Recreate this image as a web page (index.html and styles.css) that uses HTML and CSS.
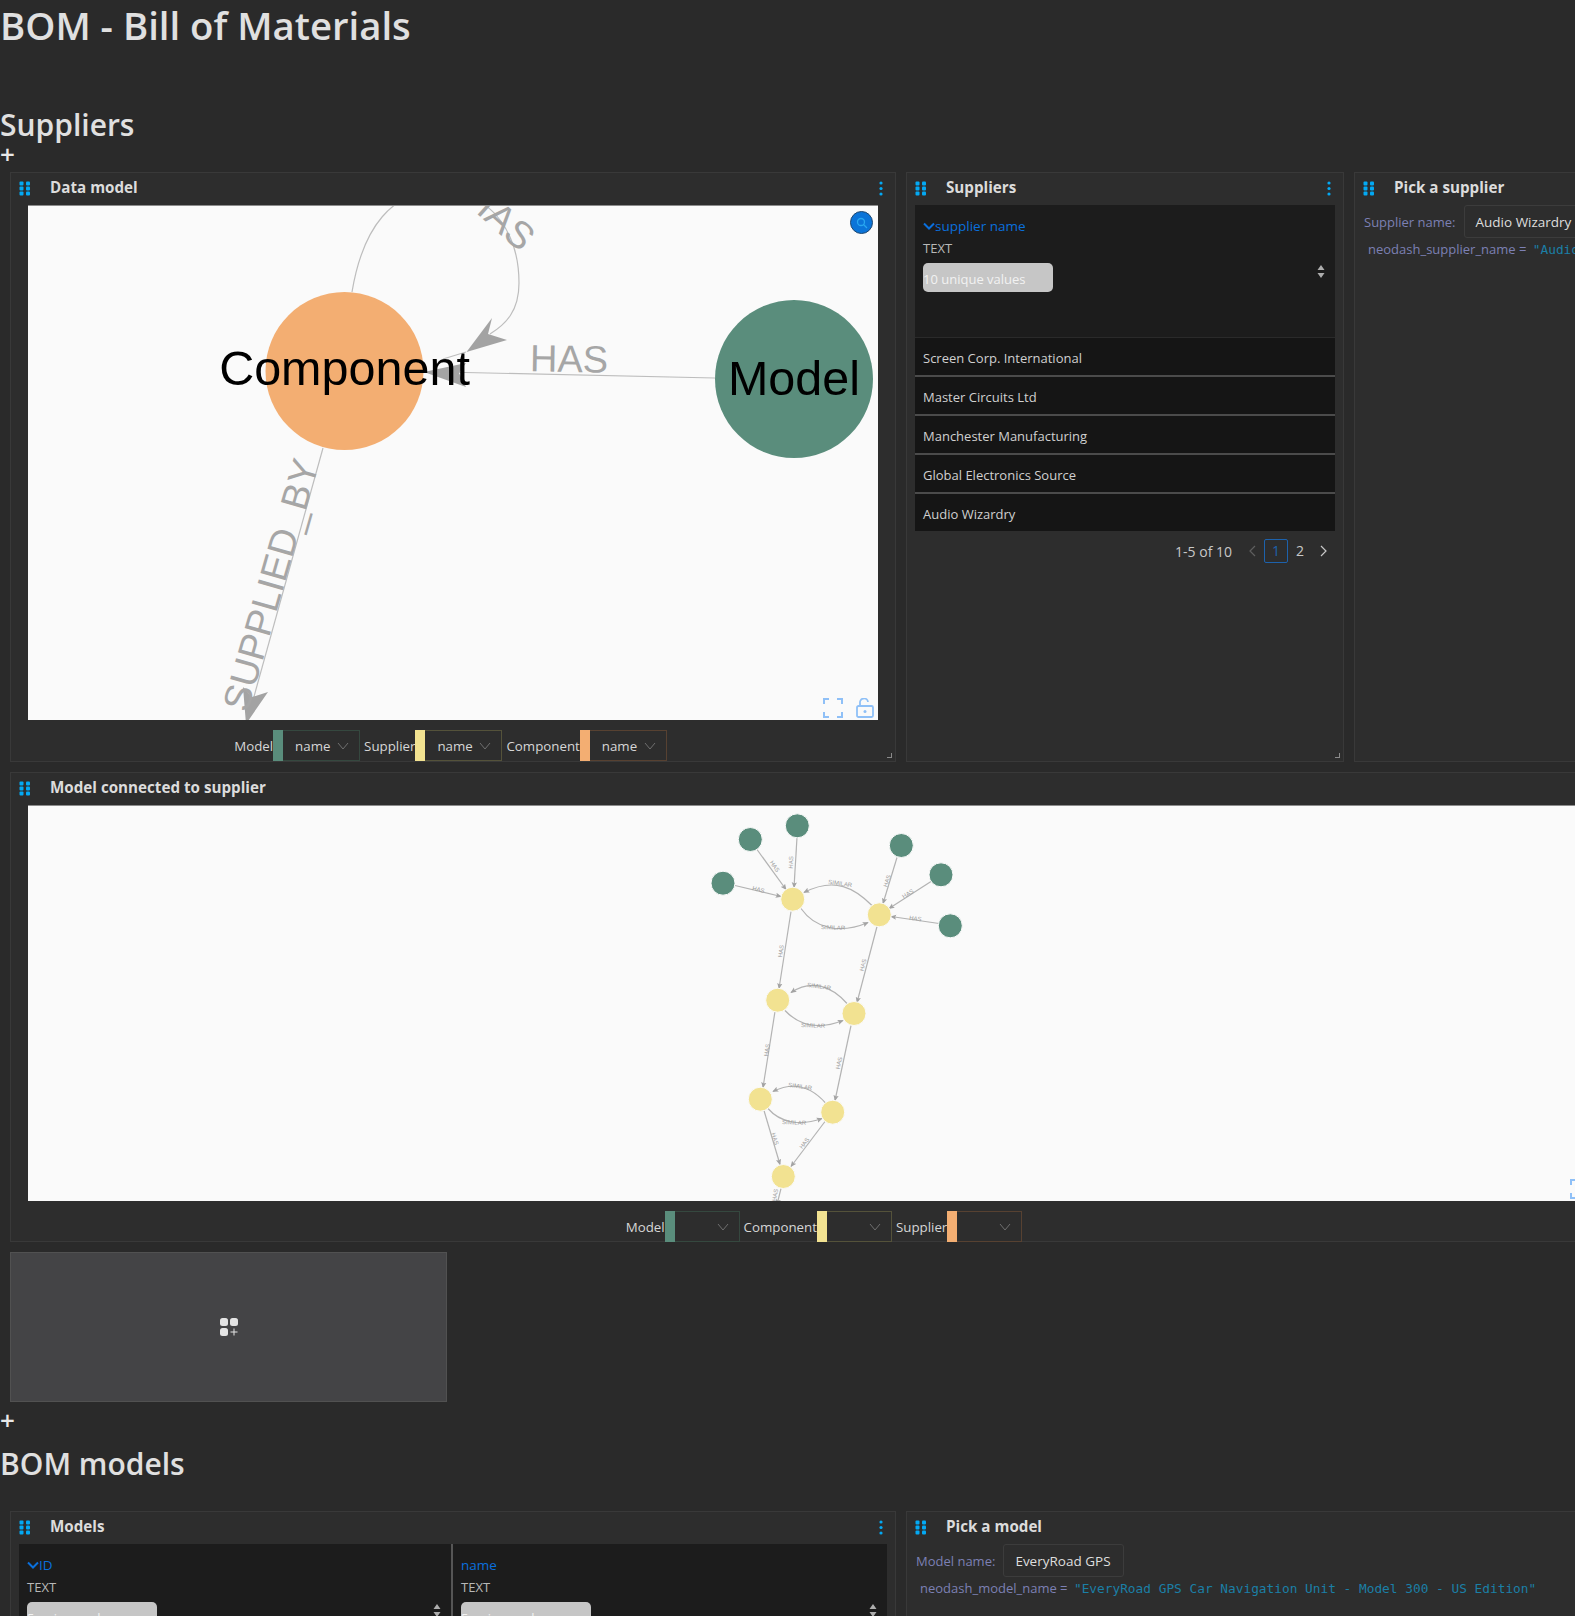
FILE: index.html
```html
<!DOCTYPE html>
<html lang="en">
<head>
  <meta charset="UTF-8" />
  <title>BOM - Bill of Materials</title>
  <link rel="stylesheet" href="styles.css">
</head>
<body>
  <svg class="sprite" aria-hidden="true">
    <symbol id="grip" viewBox="0 0 12 15">
      <rect x="0.5" y="0.5" width="4" height="4" rx="1"/><rect x="7" y="0.5" width="4" height="4" rx="1"/>
      <rect x="0.5" y="5.5" width="4" height="4" rx="1"/><rect x="7" y="5.5" width="4" height="4" rx="1"/>
      <rect x="0.5" y="10.5" width="4" height="4" rx="1"/><rect x="7" y="10.5" width="4" height="4" rx="1"/>
    </symbol>
    <symbol id="dots" viewBox="0 0 4 15">
      <circle cx="2" cy="2" r="1.6"/><circle cx="2" cy="7.5" r="1.6"/><circle cx="2" cy="13" r="1.6"/>
    </symbol>
    <symbol id="chev" viewBox="0 0 12 8">
      <path d="M1 1l5 6 5-6" fill="none" stroke="currentColor" stroke-width="1"/>
    </symbol>
    <symbol id="chev-bold" viewBox="0 0 12 8">
      <path d="M1 1.500l5 5 5-5" fill="none" stroke="currentColor" stroke-width="2"/>
    </symbol>
    <symbol id="page-prev" viewBox="0 0 8 12">
      <path d="M7 1L2 6l5 5" fill="none" stroke="currentColor" stroke-width="1.200"/>
    </symbol>
    <symbol id="page-next" viewBox="0 0 8 12">
      <path d="M1 1l5 5-5 5" fill="none" stroke="currentColor" stroke-width="1.200"/>
    </symbol>
    <symbol id="sort" viewBox="0 0 8 13">
      <path d="M4 0l3.5 5h-7zM4 13l3.5-5h-7z"/>
    </symbol>
    <symbol id="full" viewBox="0 0 20 20">
      <path d="M1 6V1h5M14 1h5v5M19 14v5h-5M6 19H1v-5" fill="none" stroke="currentColor" stroke-width="2"/>
    </symbol>
    <symbol id="lock" viewBox="0 0 18 20">
      <path d="M4 8V5a4 4 0 0 1 8-1M2.500 8h13a1.500 1.500 0 0 1 1.500 1.500v8a1.500 1.500 0 0 1-1.500 1.500h-13A1.500 1.500 0 0 1 1 17.500v-8A1.500 1.500 0 0 1 2.500 8z" fill="none" stroke="currentColor" stroke-width="1.800"/>
      <circle cx="9" cy="13.500" r="1.500" fill="currentColor"/>
    </symbol>
    <marker id="tip" viewBox="0 0 8 8" refX="7" refY="4" markerWidth="6" markerHeight="6" orient="auto" markerUnits="userSpaceOnUse">
      <path d="M0 0.500L8 4L0 7.500L1.500 4z" fill="#a3a3a3"/>
    </marker>
  </svg>

  <h1 class="dash-title">BOM - Bill of Materials</h1>

  <h2 class="page-title first">Suppliers</h2>
  <div class="add-row">+</div>
  <section class="board">
    <article class="card">
      <header class="card-head">
        <svg class="grip"><use href="#grip"/></svg>
        <span class="card-title">Data model</span>
        <svg class="dots"><use href="#dots"/></svg>
      </header>
      <div class="canvas canvas-model">
        <svg class="graph" viewBox="0 0 850 514">
          <path d="M324 86C335 20 365 -15 410 -15C470 -15 491 35 491 77C491 105 478 118 462 128" class="thin"/>
          <path d="M438 146L415 153" class="thin"/>
          <path d="M438.500 146L464 112L460 128L479 134z" class="head"/>
          <path d="M687 172L415 166" class="thin"/>
          <path d="M396 166L438 157L431 167L438 181z" class="head"/>
          <path d="M295 242L222 505" class="thin"/>
          <path d="M218 518L215 481L224 491L240 486z" class="head"/>
          <text class="big-label" transform="translate(472 11) rotate(42)" text-anchor="middle" y="13">HAS</text>
          <text class="big-label" transform="translate(541 153) rotate(1)" text-anchor="middle" y="13">HAS</text>
          <text class="big-label" transform="translate(240 378) rotate(-74)" text-anchor="middle" y="16">SUPPLIED_BY</text>
          <circle cx="316.500" cy="165" r="79" fill="#f3ae72"/>
          <circle cx="766" cy="173" r="79" fill="#5a8d7c"/>
          <text class="node-label" x="316.500" y="179" text-anchor="middle">Component</text>
          <text class="node-label" x="766" y="188.500" text-anchor="middle">Model</text>
        </svg>
        <span class="search-btn">
          <svg viewBox="0 0 12 12"><circle cx="5" cy="5" r="3.500"/><path d="M7.500 7.500L11 11"/></svg>
        </span>
        <div class="canvas-tools">
          <svg class="full"><use href="#full"/></svg>
          <svg class="lock"><use href="#lock"/></svg>
        </div>
      </div>
      <div class="legend">
        <span class="legend-name">Model</span>
        <span class="legend-box green"><i></i><b>name</b><svg><use href="#chev"/></svg></span>
        <span class="legend-name">Supplier</span>
        <span class="legend-box yellow"><i></i><b>name</b><svg><use href="#chev"/></svg></span>
        <span class="legend-name">Component</span>
        <span class="legend-box orange"><i></i><b>name</b><svg><use href="#chev"/></svg></span>
      </div>
    </article>

    <article class="card">
      <header class="card-head">
        <svg class="grip"><use href="#grip"/></svg>
        <span class="card-title">Suppliers</span>
        <svg class="dots"><use href="#dots"/></svg>
      </header>
      <div class="table">
        <div class="col-head tall">
          <div class="col-name"><svg><use href="#chev-bold"/></svg>supplier name</div>
          <div class="col-type">TEXT</div>
          <div class="col-filter">10 unique values</div>
          <svg class="sort"><use href="#sort"/></svg>
        </div>
        <div class="row">Screen Corp. International</div>
        <div class="row">Master Circuits Ltd</div>
        <div class="row">Manchester Manufacturing</div>
        <div class="row">Global Electronics Source</div>
        <div class="row">Audio Wizardry</div>
      </div>
      <div class="pager">
        <span class="pager-count">1-5 of 10</span>
        <span class="pager-arrow off"><svg><use href="#page-prev"/></svg></span>
        <span class="pager-page on">1</span>
        <span class="pager-page">2</span>
        <span class="pager-arrow"><svg><use href="#page-next"/></svg></span>
      </div>
    </article>

    <article class="card">
      <header class="card-head">
        <svg class="grip"><use href="#grip"/></svg>
        <span class="card-title pick">Pick a supplier</span>
      </header>
      <div class="pick-field">
        <span class="pick-label">Supplier name:</span>
        <span class="pick-value">Audio Wizardry</span>
      </div>
      <div class="param">neodash_supplier_name = <code>"Audio Wizardry"</code></div>
    </article>

    <article class="card wide">
      <header class="card-head">
        <svg class="grip"><use href="#grip"/></svg>
        <span class="card-title">Model connected to supplier</span>
      </header>
      <div class="canvas canvas-connected">
        <svg class="graph" viewBox="28 806 1597 394">
          <g class="edges">
            <path d="M757 849L786 889"/><path d="M797 837L794 887"/><path d="M735 885L781 896"/>
            <path d="M897 857L883 903"/><path d="M931 881L889 908"/><path d="M939 923L891 916"/>
            <path d="M791 911L779 988"/><path d="M877 926L857 1002"/><path d="M775 1011L763 1087"/>
            <path d="M851 1025L835 1100"/><path d="M764 1110L780 1164"/><path d="M825 1121L791 1166"/>
            <path d="M781 1188L777 1204"/>
            <path d="M872 905C855 888 835 876 804 892"/><path d="M801 908C815 928 840 934 868 922"/>
            <path d="M847 1003C832 986 812 978 791 992"/><path d="M785 1010C800 1026 820 1029 843 1020"/>
            <path d="M826 1103C812 1087 795 1080 773 1091"/><path d="M768 1108C780 1122 800 1126 822 1118"/>
          </g>
          <g class="edge-labels" text-anchor="middle">
            <text transform="translate(773 867) rotate(55)">HAS</text>
            <text transform="translate(793 862) rotate(-87)">HAS</text>
            <text transform="translate(758 891) rotate(13)">HAS</text>
            <text transform="translate(889 881) rotate(-73)">HAS</text>
            <text transform="translate(909 895) rotate(-33)">HAS</text>
            <text transform="translate(915 920) rotate(8)">HAS</text>
            <text transform="translate(783 951) rotate(-81)">HAS</text>
            <text transform="translate(865 965) rotate(-75)">HAS</text>
            <text transform="translate(769 1050) rotate(-81)">HAS</text>
            <text transform="translate(841 1063) rotate(-78)">HAS</text>
            <text transform="translate(773 1139) rotate(73)">HAS</text>
            <text transform="translate(806 1144) rotate(-52)">HAS</text>
            <text transform="translate(777 1195) rotate(-80)">HAS</text>
            <text transform="translate(840 885) rotate(8)">SIMILAR</text>
            <text transform="translate(833 929) rotate(2)">SIMILAR</text>
            <text transform="translate(819 988) rotate(8)">SIMILAR</text>
            <text transform="translate(813 1027) rotate(2)">SIMILAR</text>
            <text transform="translate(800 1088) rotate(8)">SIMILAR</text>
            <text transform="translate(794 1124) rotate(2)">SIMILAR</text>
          </g>
          <g fill="#5a8d7c" stroke="#fafafa">
            <circle cx="750.300" cy="839" r="12"/><circle cx="797.300" cy="825.300" r="12"/>
            <circle cx="901.300" cy="845" r="12"/><circle cx="941" cy="874.300" r="12"/>
            <circle cx="950.300" cy="925.300" r="12"/><circle cx="723" cy="882.700" r="12"/>
          </g>
          <g fill="#f2e291" stroke="#fafafa">
            <circle cx="792.700" cy="898.700" r="12"/><circle cx="879.300" cy="914.300" r="12"/>
            <circle cx="777.700" cy="999.700" r="12"/><circle cx="854" cy="1013" r="12"/>
            <circle cx="760.300" cy="1098.700" r="12"/><circle cx="832.700" cy="1111.700" r="12"/>
            <circle cx="783.300" cy="1176" r="12"/>
          </g>
        </svg>
        <div class="canvas-tools">
          <svg class="full"><use href="#full"/></svg>
          <svg class="lock"><use href="#lock"/></svg>
        </div>
      </div>
      <div class="legend">
        <span class="legend-name">Model</span>
        <span class="legend-box green short"><i></i><svg><use href="#chev"/></svg></span>
        <span class="legend-name">Component</span>
        <span class="legend-box yellow short"><i></i><svg><use href="#chev"/></svg></span>
        <span class="legend-name">Supplier</span>
        <span class="legend-box orange short"><i></i><svg><use href="#chev"/></svg></span>
      </div>
    </article>

    <div class="add-card">
      <svg viewBox="0 0 18 18">
        <rect x="0" y="0" width="8" height="8" rx="2.500"/><rect x="10" y="0" width="8" height="8" rx="2.500"/>
        <rect x="0" y="10" width="8" height="8" rx="2.500"/>
        <path d="M14 10.500v7M10.500 14h7" fill="none" stroke="#e4e4e4"/>
      </svg>
    </div>
  </section>

  <div class="add-row lower">+</div>
  <h2 class="page-title">BOM models</h2>
  <section class="board second">
    <article class="card cut">
      <header class="card-head">
        <svg class="grip"><use href="#grip"/></svg>
        <span class="card-title">Models</span>
        <svg class="dots"><use href="#dots"/></svg>
      </header>
      <div class="table split">
        <div class="col-head">
          <div class="col-name"><svg><use href="#chev-bold"/></svg>ID</div>
          <div class="col-type">TEXT</div>
          <div class="col-filter">5 unique values</div>
          <svg class="sort"><use href="#sort"/></svg>
        </div>
        <div class="col-head">
          <div class="col-name">name</div>
          <div class="col-type">TEXT</div>
          <div class="col-filter">5 unique values</div>
          <svg class="sort"><use href="#sort"/></svg>
        </div>
      </div>
    </article>
    <article class="card cut">
      <header class="card-head">
        <svg class="grip"><use href="#grip"/></svg>
        <span class="card-title pick">Pick a model</span>
      </header>
      <div class="pick-field">
        <span class="pick-label">Model name:</span>
        <span class="pick-value">EveryRoad GPS</span>
      </div>
      <div class="param">neodash_model_name = <code>"EveryRoad GPS Car Navigation Unit - Model 300 - US Edition"</code></div>
    </article>
  </section>
</body>
</html>
```

FILE: styles.css
```css
html, body {
  height: 1616px;
  overflow: hidden;
}

body {
  margin: 0;
  background: #2a2a2a;
  color: #e0e0e0;
  font-family: "Open Sans", "Noto Sans", sans-serif;
  font-size: 13px;
}

.sprite {
  position: absolute;
  width: 0;
  height: 0;
}

.dash-title {
  margin: 0 0 51px;
  font-size: 38.300px;
  font-weight: 600;
  line-height: 50px;
}

.page-title {
  margin: 0;
  padding-top: 1px;
  font-size: 30px;
  font-weight: 600;
  line-height: 45px;
}

.add-row {
  height: 16px;
  margin-top: -1px;
  margin-bottom: 1px;
  font-size: 26px;
  font-weight: 600;
  line-height: 16px;
  color: #e8e8e8;
}

.add-row.lower {
  margin: 10px 0 12px;
}

.board {
  display: grid;
  grid-template-columns: 886px 438px 289px;
  grid-template-rows: 590px 470px 150px;
  gap: 10px;
  padding: 9px 10px 0;
}

.board.second {
  grid-template-columns: 886px 900px;
  grid-template-rows: 110px;
  gap: 10px;
  padding-top: 25px;
}

.card {
  position: relative;
  display: flex;
  flex-direction: column;
  min-width: 0;
  background: #2d2d2d;
  border: 1px solid #393939;
  box-sizing: border-box;
}

.card::after {
  content: "";
  position: absolute;
  right: 3px;
  bottom: 3px;
  width: 4px;
  height: 4px;
  border-right: 1px solid #8a8a8a;
  border-bottom: 1px solid #8a8a8a;
}

.card.cut::after {
  display: none;
}

.card.wide {
  grid-column: 1 / -1;
}

.card-head {
  display: flex;
  align-items: center;
  flex: none;
  height: 32px;
  padding: 0 11px 5px 8px;
  box-sizing: border-box;
}

.grip {
  width: 12px;
  height: 15px;
  fill: #03a9f4;
  margin: 3px 19px 0 0;
}

.dots {
  width: 4px;
  height: 15px;
  fill: #03a9f4;
  margin: 3px 1px 0 auto;
}

.card-title {
  font-size: 15.200px;
  font-weight: 700;
  color: #dcdcdc;
}

.canvas {
  position: relative;
  flex: none;
  margin: 0 17px;
  background: #fafafa;
  border-top: 1px solid #8c8c8c;
  overflow: hidden;
}

.canvas-model {
  height: 514px;
}

.canvas-connected {
  height: 395px;
}

.graph {
  display: block;
  width: 100%;
  height: 100%;
}

.thin {
  fill: none;
  stroke: #bdbdbd;
  stroke-width: 1.200;
}

.head {
  fill: #a3a3a3;
}

.big-label {
  font-family: "Liberation Sans", Arial, sans-serif;
  font-size: 38px;
  fill: #a6a6a6;
}

.node-label {
  font-family: "Liberation Sans", Arial, sans-serif;
  font-size: 48.500px;
  fill: #000;
}

.edges path {
  fill: none;
  stroke: #b3b3b3;
  stroke-width: 1.200;
  marker-end: url(#tip);
}

.edge-labels text {
  font-family: "Liberation Sans", Arial, sans-serif;
  font-size: 6px;
  fill: #9a9a9a;
}

.search-btn {
  position: absolute;
  top: 5px;
  right: 5px;
  display: flex;
  align-items: center;
  justify-content: center;
  width: 23px;
  height: 23px;
  border-radius: 50%;
  background: #0b74d8;
  border: 1px solid #20476e;
  box-sizing: border-box;
}

.search-btn svg {
  width: 12px;
  height: 12px;
  fill: none;
  stroke: #29a7f0;
  stroke-width: 1.300;
}

.canvas-tools {
  position: absolute;
  right: 4px;
  bottom: 2px;
  display: flex;
  gap: 13px;
  color: #8fc0f7;
}

.full {
  width: 20px;
  height: 20px;
}

.lock {
  width: 18px;
  height: 20px;
}

.legend {
  display: flex;
  justify-content: center;
  height: 31px;
  margin-top: 10px;
  padding-right: 9px;
  font-size: 13.300px;
  line-height: 32px;
}

.legend-name {
  margin-left: 4px;
  color: #d6d6d6;
}

.legend-box {
  display: flex;
  align-items: center;
  width: 87px;
  border: 1px solid;
  box-sizing: border-box;
  color: #6f6f6f;
}

.legend-box.short {
  width: 75px;
}

.legend-box i {
  align-self: stretch;
  width: 10px;
  margin: -1px 0 -1px -1px;
}

.legend-box b {
  margin-left: 12px;
  font-weight: 400;
  color: #d6d6d6;
}

.legend-box svg {
  width: 12px;
  height: 8px;
  margin-left: auto;
  margin-right: 10px;
}

.green { border-color: #35483f; }
.green i { background: #5a8d7c; }
.yellow { border-color: #54523a; }
.yellow i { background: #f2e291; }
.orange { border-color: #574131; }
.orange i { background: #f3ae72; }

.table {
  flex: none;
  margin: 0 8px;
  background: #1c1c1c;
}

.table.split {
  display: grid;
  grid-template-columns: 432px 1fr;
  height: 80px;
  overflow: hidden;
}

.col-head {
  position: relative;
  padding: 10px 8px 0;
}

.col-head.tall {
  height: 122px;
  border-bottom: 1px solid #2a2a2a;
}

.split .col-head + .col-head {
  border-left: 2px solid #565656;
}

.col-name {
  display: flex;
  align-items: center;
  height: 22px;
  color: #0a6fdc;
  font-size: 13.500px;
}

.col-name svg {
  width: 12px;
  height: 8px;
}

.col-type {
  margin-top: 1px;
  line-height: 20px;
  color: #b8b8b8;
}

.col-filter {
  width: 130px;
  height: 29px;
  margin-top: 5px;
  border-radius: 5px;
  background: #c6c6c6;
  color: #f2f2f2;
  line-height: 32px;
  white-space: nowrap;
  overflow: hidden;
}

.sort {
  position: absolute;
  top: 60px;
  right: 10px;
  width: 8px;
  height: 13px;
  fill: #adadad;
}

.row {
  height: 37px;
  padding-left: 8px;
  background: #151515;
  border-bottom: 2px solid #4b4b4b;
  line-height: 40px;
  color: #d0d0d0;
}

.row:last-child {
  border-bottom: none;
}

.pager {
  display: flex;
  align-items: center;
  justify-content: flex-end;
  height: 24px;
  margin: 8px 7px 0 0;
  font-size: 14px;
  color: #c8c8c8;
}

.pager-count {
  margin-right: 8px;
}

.pager-arrow {
  display: flex;
  justify-content: center;
  width: 24px;
}

.pager-arrow svg {
  width: 8px;
  height: 12px;
}

.pager-arrow.off {
  color: #5f5f5f;
}

.pager-page {
  width: 24px;
  height: 24px;
  line-height: 22px;
  text-align: center;
  box-sizing: border-box;
  border: 1px solid transparent;
  border-radius: 2px;
}

.pager-page.on {
  border-color: #1d62ac;
  color: #1d62ac;
}

.pick-field {
  display: flex;
  align-items: center;
  margin: 0 0 0 9px;
}

.pick-label {
  color: #7c80b4;
  margin-right: 8px;
}

.pick-value {
  padding: 0 12px 0 11px;
  height: 31px;
  font-size: 13.500px;
  line-height: 32px;
  border: 1px solid #3c3c3c;
  border-radius: 3px;
  color: #dedede;
  white-space: nowrap;
}

.param {
  margin: 1px 0 0 13px;
  line-height: 20px;
  color: #7c80b4;
  white-space: nowrap;
}

.param code {
  margin-left: 3px;
  font-family: "DejaVu Sans Mono", "Liberation Mono", monospace;
  font-size: 12.800px;
  color: #1b7fa6;
}

.add-card {
  grid-column: 1;
  display: flex;
  align-items: center;
  justify-content: center;
  width: 437px;
  background: #444446;
  border: 1px solid #515151;
  box-sizing: border-box;
}

.add-card svg {
  width: 18px;
  height: 18px;
  fill: #e4e4e4;
}
```
